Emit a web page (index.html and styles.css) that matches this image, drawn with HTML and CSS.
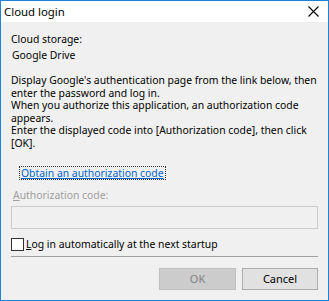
FILE: index.html
```html
<!DOCTYPE html>
<html lang="en">
<head>
<meta charset="utf-8">
<title>Cloud login</title>
<link rel="stylesheet" href="styles.css">
</head>
<body>
<div class="dialog">
  <div class="titlebar">
    <span class="title">Cloud login</span>
    <svg class="close" width="11" height="11" viewBox="0 0 11 11">
      <path d="M0.5 0.5 L10.5 10.5 M10.5 0.5 L0.5 10.5" stroke="#000" stroke-width="1.1" fill="none"/>
    </svg>
  </div>
  <div class="content">
    <div class="line">Cloud storage:</div>
    <div class="line storage">Google Drive</div>
    <div class="desc">
      <div class="line">Display Google's authentication page from the link below, then</div>
      <div class="line">enter the password and log in.</div>
      <div class="line">When you authorize this application, an authorization code</div>
      <div class="line">appears.</div>
      <div class="line">Enter the displayed code into [Authorization code], then click</div>
      <div class="line">[OK].</div>
    </div>
    <div class="linkrow"><a class="link" href="#">Obtain an authorization code</a></div>
    <div class="line disabled authlabel"><u>A</u>uthorization code:</div>
    <div class="codebox"></div>
    <div class="checkrow">
      <span class="checkbox"></span>
      <span class="line"><u>L</u>og in automatically at the next startup</span>
    </div>
    <div class="separator"></div>
    <div class="buttons">
      <div class="button disabled-btn">OK</div>
      <div class="button">Cancel</div>
    </div>
  </div>
</div>
</body>
</html>
```
FILE: styles.css
```css
body
    {
        margin: 0;
        font-family: "Noto Sans", "Open Sans", sans-serif;
        font-size: 10.4px;
        color: #000;
    }

.dialog
    {
        width: 329px;
        height: 301px;
        box-sizing: border-box;
        border: 1px solid #1883d7;
        background-color: #f0f0f0;
        display: flex;
        flex-direction: column;
    }

.titlebar
    {
        height: 21px;
        background-color: #fff;
        display: flex;
        align-items: center;
        justify-content: space-between;
        padding: 0 9px 0 3px;
    }

.title
    {
        font-size: 11.4px;
    }

.close
    {
        display: block;
    }

.content
    {
        padding: 11px 10px 0 10px;
        display: flex;
        flex-direction: column;
    }

.line
    {
        line-height: 13px;
        white-space: nowrap;
    }

.storage
    {
        margin-top: 3px;
        padding-left: 1px;
    }

.desc
    {
        margin-top: 12px;
    }

.desc .line
    {
        line-height: 12.6px;
    }

.linkrow
    {
        margin-top: 17px;
        padding-left: 9px;
        display: flex;
    }

.link
    {
        color: #0066cc;
        line-height: 12px;
        outline: 1px dotted #333;
        padding: 0 1px;
    }

.disabled
    {
        color: #a0a0a0;
    }

.authlabel
    {
        margin-top: 10px;
        padding-left: 2px;
    }

.codebox
    {
        margin-top: 4px;
        height: 23px;
        box-sizing: border-box;
        border: 1px solid #cccccc;
        background-color: #f0f0f0;
    }

.checkrow
    {
        margin-top: 9px;
        display: flex;
        align-items: center;
        gap: 2px;
    }

.checkbox
    {
        width: 13px;
        height: 13px;
        box-sizing: border-box;
        border: 1px solid #333;
        background-color: #fff;
    }

.separator
    {
        margin-top: 5px;
        height: 1px;
        background-color: #a0a0a0;
    }

.buttons
    {
        margin-top: 11px;
        display: flex;
        justify-content: flex-end;
        gap: 6px;
    }

.button
    {
        width: 76px;
        height: 22px;
        box-sizing: border-box;
        border: 1px solid #adadad;
        background-color: #e1e1e1;
        display: flex;
        align-items: center;
        justify-content: center;
        font-size: 11px;
    }

.disabled-btn
    {
        background-color: #cccccc;
        border-color: #bfbfbf;
        color: #838383;
        width: 77px;
    }
```
